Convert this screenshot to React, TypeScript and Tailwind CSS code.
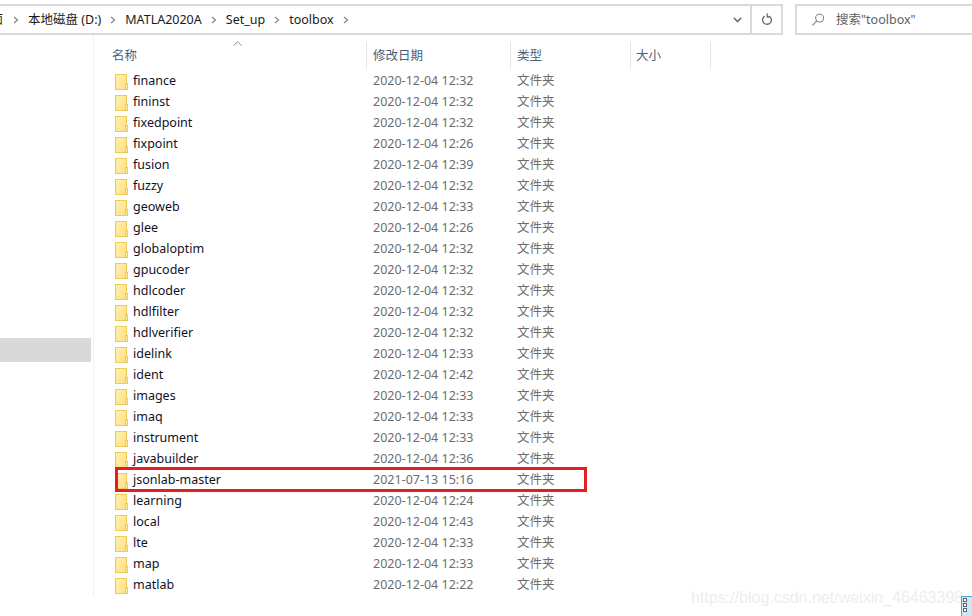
const rows: [string, string][] = [
  ["finance", "2020-12-04 12:32"],
  ["fininst", "2020-12-04 12:32"],
  ["fixedpoint", "2020-12-04 12:32"],
  ["fixpoint", "2020-12-04 12:26"],
  ["fusion", "2020-12-04 12:39"],
  ["fuzzy", "2020-12-04 12:32"],
  ["geoweb", "2020-12-04 12:33"],
  ["glee", "2020-12-04 12:26"],
  ["globaloptim", "2020-12-04 12:32"],
  ["gpucoder", "2020-12-04 12:32"],
  ["hdlcoder", "2020-12-04 12:32"],
  ["hdlfilter", "2020-12-04 12:32"],
  ["hdlverifier", "2020-12-04 12:32"],
  ["idelink", "2020-12-04 12:33"],
  ["ident", "2020-12-04 12:42"],
  ["images", "2020-12-04 12:33"],
  ["imaq", "2020-12-04 12:33"],
  ["instrument", "2020-12-04 12:33"],
  ["javabuilder", "2020-12-04 12:36"],
  ["jsonlab-master", "2021-07-13 15:16"],
  ["learning", "2020-12-04 12:24"],
  ["local", "2020-12-04 12:43"],
  ["lte", "2020-12-04 12:33"],
  ["map", "2020-12-04 12:33"],
  ["matlab", "2020-12-04 12:22"],
];

const font = "font-['Noto_Sans','Noto_Sans_CJK_SC',sans-serif]";

function Folder() {
  return (
    <svg width="13" height="16" viewBox="0 0 13 16" className="shrink-0">
      <defs>
        <linearGradient id="fg" x1="0" y1="0" x2="1" y2="1">
          <stop offset="0" stopColor="#fff0b0" />
          <stop offset="1" stopColor="#ffdf84" />
        </linearGradient>
      </defs>
      <rect x="0.5" y="0.5" width="11" height="15" fill="url(#fg)" stroke="#eecb55" />
      <rect x="10.5" y="9.5" width="2" height="6" fill="#ffe9a0" stroke="#eecb55" />
    </svg>
  );
}

function Chevron() {
  return (
    <svg width="6" height="8" viewBox="0 0 6 8" className="shrink-0">
      <path d="M1 1 L4.5 4 L1 7" fill="none" stroke="#8a8a8a" strokeWidth="1.3" />
    </svg>
  );
}

export default function App() {
  return (
    <div className={`relative w-[972px] h-[616px] overflow-hidden bg-white ${font}`}>
      <div className="flex h-[35px] pt-1">
        <div className="flex items-center w-[783px] border-y-2 border-r-2 border-[#d9d9d9] text-[12.5px] text-[#1a1a1a]">
          <span className="w-[3px] overflow-hidden whitespace-nowrap flex justify-end pt-px">
            <span>面</span>
          </span>
          <div className="flex items-center gap-[8px] ml-[10px] flex-1 pt-px">
            <Chevron />
            <span className="ml-px">本地磁盘 (D:)</span>
            <span className="ml-px"><Chevron /></span>
            <span className="ml-px">MATLA2020A</span>
            <span className="ml-px"><Chevron /></span>
            <span className="ml-px">Set_up</span>
            <span className="ml-px"><Chevron /></span>
            <span className="ml-px">toolbox</span>
            <span className="ml-px"><Chevron /></span>
          </div>
          <svg width="9" height="6" viewBox="0 0 9 6" className="mr-[8px]">
            <path d="M0.8 0.8 L4.5 4.5 L8.2 0.8" fill="none" stroke="#6e6e6e" strokeWidth="1.6" />
          </svg>
          <div className="flex items-center justify-center w-[31px] h-full border-l-2 border-[#d9d9d9]">
            <svg width="12" height="13" viewBox="0 0 12 13">
              <path d="M3.6 3.2 A4.4 4.4 0 1 0 8 3 M6.2 0.6 V4 H9.6" fill="none" stroke="#6e6e6e" strokeWidth="1.4" />
            </svg>
          </div>
        </div>
        <div className="ml-3 flex flex-1 items-center border-y-2 border-l-2 border-[#d9d9d9] pl-[14px] text-[12.5px] text-[#5f5f5f]">
          <svg width="14" height="14" viewBox="0 0 14 14">
            <circle cx="8.6" cy="5.2" r="4" fill="none" stroke="#7a7a7a" strokeWidth="1" />
            <path d="M5.6 8 L1.5 12.5" stroke="#c08a6a" strokeWidth="1.2" />
          </svg>
          <span className="ml-[11px] pt-px">搜索"toolbox"</span>
        </div>
      </div>

      <div className="flex h-[561px]">
        <div className="w-[94px] h-[561px] border-r border-[#f1f1f1] pr-[2px]">
          <div className="mt-[303px] h-6 bg-[#d9d9d9]" />
        </div>
        <div className="flex-1 pl-[18px]">
          <div className="flex h-[36px] pt-[7px] text-[12.5px] text-[#4c607a]">
            <div className="relative w-[255px] h-[27px] border-r border-[#e5e5e5] flex items-center pt-[2px]">
              <span>名称</span>
              <svg width="9" height="5" viewBox="0 0 9 5" className="absolute left-[121px] -top-[1px]">
                <path d="M0.6 4.5 L4.5 0.8 L8.4 4.5" fill="none" stroke="#8a8a8a" strokeWidth="1" />
              </svg>
            </div>
            <div className="w-[144px] h-[27px] border-r border-[#e5e5e5] pl-[6px] pt-[2px] flex items-center">修改日期</div>
            <div className="w-[120px] h-[27px] border-r border-[#e5e5e5] pl-[6px] pt-[2px] flex items-center">类型</div>
            <div className="w-[80px] h-[27px] border-r border-[#e5e5e5] pl-[5px] pt-[2px] flex items-center">大小</div>
          </div>
          <div>
            {rows.map(([name, date]) => (
              <div key={name} className="flex items-center h-[21px] text-[12.5px]">
                <div className="flex items-center w-[261px] pl-[3px] text-[#11111f]">
                  <Folder />
                  <span className="ml-[5px] whitespace-nowrap">{name}</span>
                </div>
                <div className="w-[144px] text-[#6d6d6d] whitespace-nowrap">{date}</div>
                <div className="text-[#6d6d6d]">文件夹</div>
              </div>
            ))}
          </div>
        </div>
      </div>

      <div className="absolute left-[115px] top-[467px] w-[472px] h-[25px] border-[3px] border-[#e81c24]" />

      <div className="absolute left-[691px] top-[586px] text-[16px] leading-6 whitespace-nowrap text-[#eeeeee] font-['Liberation_Sans',sans-serif]">
        https://blog.csdn.net/weixin_46463398
      </div>

      <div className="absolute left-[961px] top-[596px] w-[11px] h-5 border-l border-t border-[#3fa9dc] bg-[#cfe6f3] pl-[1px] pt-[1px]">
        <div className="w-1 h-1 border border-[#666] bg-white mb-px" />
        <div className="w-1 h-1 border border-[#666] bg-white mb-px" />
        <div className="w-1 h-1 border border-[#666] bg-white" />
      </div>
    </div>
  );
}
